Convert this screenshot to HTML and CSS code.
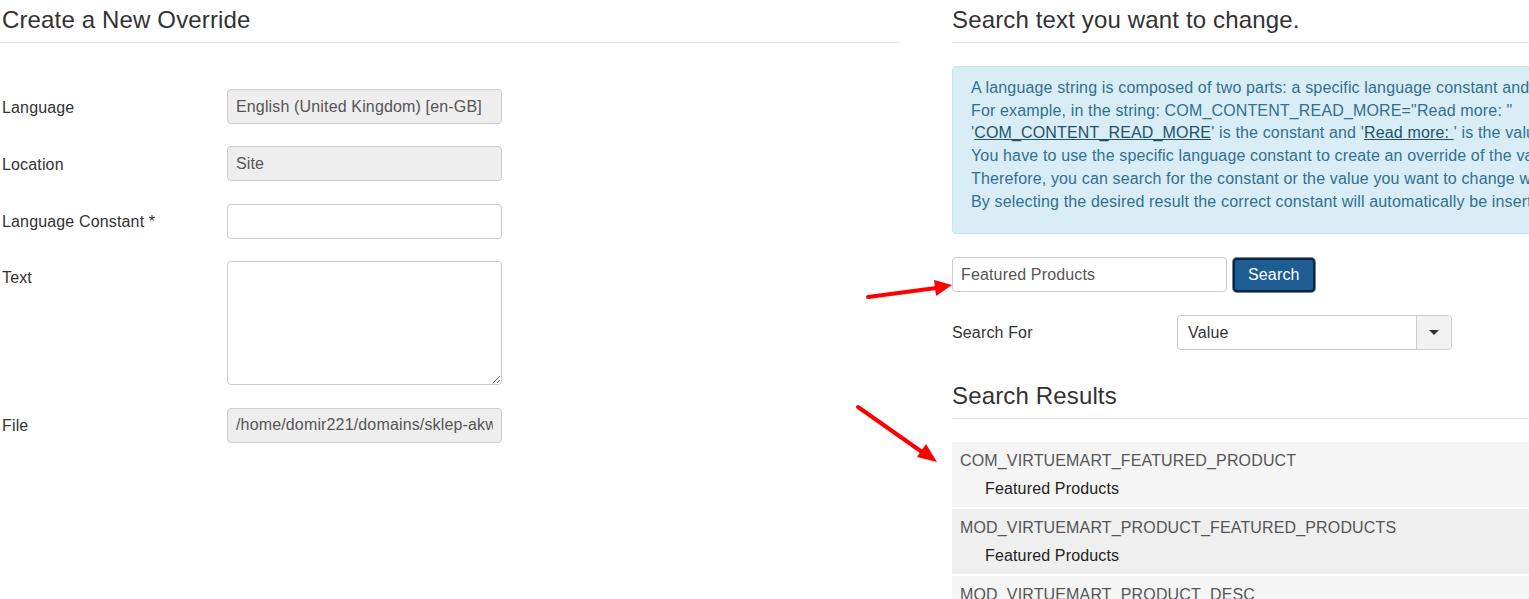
FILE: index.html
```html
<!DOCTYPE html>
<html lang="en">

<head>
    <meta charset="UTF-8">
    <title>Create a New Override</title>
    <link rel="stylesheet" href="styles.css">
</head>

<body>
    <div class="page">
        <div class="colLeft">
            <h2 class="legend">Create a New Override</h2>

            <div class="formRow">
                <label>Language</label>
                <input class="field readonly" type="text" value="English (United Kingdom) [en-GB]" readonly>
            </div>
            <div class="formRow">
                <label>Location</label>
                <input class="field readonly" type="text" value="Site" readonly>
            </div>
            <div class="formRow">
                <label>Language Constant *</label>
                <input class="field" type="text">
            </div>
            <div class="formRow">
                <label class="topLabel">Text</label>
                <textarea class="field area"></textarea>
            </div>
            <div class="formRow">
                <label>File</label>
                <input class="field readonly" type="text" value="/home/domir221/domains/sklep-akwarystyczny.pl/public_html/language/overrides/en-GB.override.ini" readonly>
            </div>
        </div>

        <div class="colRight">
            <h2 class="legend">Search text you want to change.</h2>

            <div class="alertInfo">
                A language string is composed of two parts: a specific language constant and its value.<br>
                For example, in the string: COM_CONTENT_READ_MORE="Read more: "<br>
                '<span class="alertLink">COM_CONTENT_READ_MORE</span>' is the constant and '<span class="alertLink">Read more: </span>' is the value.<br>
                You have to use the specific language constant to create an override of the value.<br>
                Therefore, you can search for the constant or the value you want to change with the search field below.<br>
                By selecting the desired result the correct constant will automatically be inserted into the form.
            </div>

            <div class="searchRow">
                <input class="field" type="text" value="Featured Products">
                <button class="btnSearch">Search</button>
            </div>

            <div class="formRow searchFor">
                <label>Search For</label>
                <div class="selectBox">
                    <span class="selectValue">Value</span>
                    <span class="selectArrow"><span class="caret"></span></span>
                </div>
            </div>

            <h2 class="legend results">Search Results</h2>

            <ul class="resultList">
                <li>
                    <div class="constant">COM_VIRTUEMART_FEATURED_PRODUCT</div>
                    <div class="value">Featured Products</div>
                </li>
                <li>
                    <div class="constant">MOD_VIRTUEMART_PRODUCT_FEATURED_PRODUCTS</div>
                    <div class="value">Featured Products</div>
                </li>
                <li>
                    <div class="constant">MOD_VIRTUEMART_PRODUCT_DESC</div>
                    <div class="value">Featured Products</div>
                </li>
            </ul>
        </div>

        <!-- annotation arrows -->
        <svg class="arrows" width="1529" height="599" viewBox="0 0 1529 599">
            <line x1="868" y1="297" x2="936" y2="288" stroke="#ff0000" stroke-width="4" stroke-linecap="round" />
            <polygon points="952,285 934,280 936,296" fill="#ff0000" />
            <line x1="858" y1="407" x2="922" y2="452" stroke="#ff0000" stroke-width="4" stroke-linecap="round" />
            <polygon points="937,462 926,444 917,457" fill="#ff0000" />
        </svg>
    </div>
</body>

</html>
```

FILE: styles.css
```css
html,
body {
    margin: 0;
    height: 100%;
}

body {
    font-family: "Liberation Sans", Arial, sans-serif;
    font-size: 16px;
    letter-spacing: 0.15px;
    color: #333;
    background: #fff;
    overflow: hidden;
}

.page {
    position: relative;
    display: flex;
    gap: 52px;
    width: 1700px;
}

.colLeft {
    width: 900px;
    flex: none;
}

.colRight {
    width: 740px;
    flex: none;
}

.legend {
    margin: 0;
    padding: 0 2px;
    height: 42px;
    line-height: 40px;
    font-size: 24px;
    font-weight: normal;
    color: #333;
    border-bottom: 1px solid #e5e5e5;
}

.colRight .legend {
    padding: 0;
}

.colLeft .legend {
    margin-bottom: 46px;
}

.formRow {
    display: flex;
    align-items: center;
    margin-bottom: 22.4px;
}

.formRow label {
    width: 225px;
    flex: none;
    padding-left: 2px;
    padding-top: 2px;
}

.formRow .topLabel {
    align-self: flex-start;
    padding-top: 8px;
}

.field {
    box-sizing: border-box;
    width: 275px;
    height: 35px;
    padding: 6px 8px;
    font-family: "Liberation Sans", Arial, sans-serif;
    font-size: 16px;
    letter-spacing: 0.15px;
    color: #555;
    background: #fff;
    border: 1px solid #ccc;
    border-radius: 4px;
    outline: none;
}

.readonly {
    background: #eee;
}

.area {
    display: block;
    height: 124px;
    resize: vertical;
}

/* right side */
.alertInfo {
    margin-top: 23px;
    padding: 10px 18px 20px 18px;
    background: #d9edf7;
    border: 1px solid #bce8f1;
    border-radius: 4px;
    color: #31708f;
    line-height: 22.7px;
    white-space: nowrap;
}

.alertLink {
    text-decoration: underline;
    color: #245269;
}

.searchRow {
    display: flex;
    align-items: center;
    gap: 6px;
    margin-top: 23px;
    margin-bottom: 23px;
}

.btnSearch {
    height: 34px;
    padding: 0 13px;
    font-family: "Liberation Sans", Arial, sans-serif;
    font-size: 16px;
    letter-spacing: 0.15px;
    color: #fff;
    background: #1d5d93;
    border: 2px solid #0f2438;
    border-radius: 4px;
    box-shadow: 0 0 0 1px #5f86ab;
    margin-top: 1px;
}

.searchFor {
    margin-bottom: 0;
}

.searchFor label {
    padding-left: 0;
    padding-top: 0;
}

.selectBox {
    box-sizing: border-box;
    display: flex;
    width: 275px;
    height: 35px;
    border: 1px solid #ccc;
    border-radius: 4px;
    overflow: hidden;
}

.selectValue {
    flex: 1;
    padding: 0 10px;
    line-height: 33px;
    color: #333;
}

.selectArrow {
    width: 34px;
    display: flex;
    align-items: center;
    justify-content: center;
    background: #f2f2f2;
    border-left: 1px solid #ccc;
}

.caret {
    width: 0;
    height: 0;
    border-left: 5px solid transparent;
    border-right: 5px solid transparent;
    border-top: 5px solid #333;
}

.legend.results {
    margin-top: 26px;
    margin-bottom: 23px;
}

.resultList {
    list-style: none;
    margin: 0;
    padding: 0;
}

.resultList li {
    padding: 6px 8px 4px 8px;
    margin-bottom: 2px;
    background: #f5f5f5;
}

.resultList li:nth-child(2) {
    background: #efefef;
}

.constant {
    line-height: 26px;
    color: #555;
}

.value {
    line-height: 29px;
    padding-left: 25px;
    color: #222;
}

.arrows {
    position: absolute;
    left: 0;
    top: 0;
    pointer-events: none;
}
```
